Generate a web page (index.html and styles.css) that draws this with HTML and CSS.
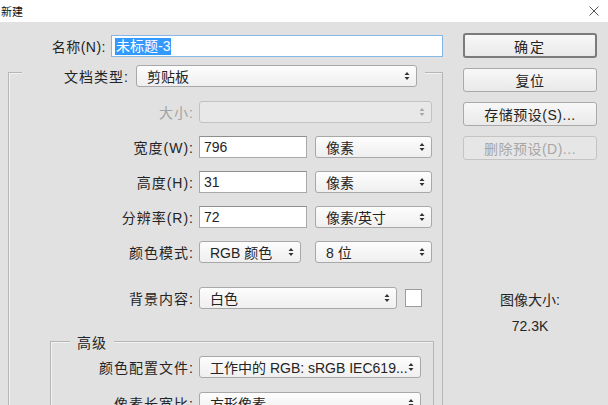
FILE: index.html
```
<!DOCTYPE html>
<html lang="zh-CN">
<head>
<meta charset="utf-8">
<title>新建</title>
<link rel="stylesheet" href="styles.css">
</head>
<body>
<div class="titlebar">
  <span class="title">新建</span>
  <svg class="close" viewBox="0 0 10 10"><path d="M0.5 0.5 L9.5 9.5 M9.5 0.5 L0.5 9.5"/></svg>
</div>
<div class="dialog">
  <div class="left">
    <div class="name-row">
      <span class="name-label">名称(N):</span>
      <div class="text-input name-input"><span class="sel">未标题-3</span></div>
    </div>
    <div class="group preset">
      <div class="legend preset-legend">
        <span class="legend-label">文档类型:</span>
        <div class="select w-doc"><span>剪贴板</span><svg class="arr" viewBox="0 0 6 10"><path d="M3 1 L5.5 4 H0.5Z M3 9 L5.5 6 H0.5Z"/></svg></div>
      </div>
      <div class="rows">
        <div class="row">
          <span class="label disabled">大小:</span>
          <div class="select disabled-select w-size"><span></span><svg class="arr" viewBox="0 0 6 10"><path d="M3 1 L5.5 4 H0.5Z M3 9 L5.5 6 H0.5Z"/></svg></div>
        </div>
        <div class="row">
          <span class="label">宽度(W):</span>
          <div class="text-input w-num">796</div>
          <div class="select w-unit gap8"><span>像素</span><svg class="arr" viewBox="0 0 6 10"><path d="M3 1 L5.5 4 H0.5Z M3 9 L5.5 6 H0.5Z"/></svg></div>
        </div>
        <div class="row">
          <span class="label">高度(H):</span>
          <div class="text-input w-num">31</div>
          <div class="select w-unit gap8"><span>像素</span><svg class="arr" viewBox="0 0 6 10"><path d="M3 1 L5.5 4 H0.5Z M3 9 L5.5 6 H0.5Z"/></svg></div>
        </div>
        <div class="row">
          <span class="label">分辨率(R):</span>
          <div class="text-input w-num">72</div>
          <div class="select w-unit gap8"><span>像素/英寸</span><svg class="arr" viewBox="0 0 6 10"><path d="M3 1 L5.5 4 H0.5Z M3 9 L5.5 6 H0.5Z"/></svg></div>
        </div>
        <div class="row">
          <span class="label">颜色模式:</span>
          <div class="select w-mode"><span>RGB 颜色</span><svg class="arr" viewBox="0 0 6 10"><path d="M3 1 L5.5 4 H0.5Z M3 9 L5.5 6 H0.5Z"/></svg></div>
          <div class="select w-unit gap14"><span>8 位</span><svg class="arr" viewBox="0 0 6 10"><path d="M3 1 L5.5 4 H0.5Z M3 9 L5.5 6 H0.5Z"/></svg></div>
        </div>
        <div class="row row-bg">
          <span class="label">背景内容:</span>
          <div class="select w-bg"><span>白色</span><svg class="arr" viewBox="0 0 6 10"><path d="M3 1 L5.5 4 H0.5Z M3 9 L5.5 6 H0.5Z"/></svg></div>
          <div class="swatch"></div>
        </div>
      </div>
      <div class="group adv">
        <div class="legend adv-legend">高级</div>
        <div class="rows adv-rows">
          <div class="row">
            <span class="label adv-label">颜色配置文件:</span>
            <div class="select w-adv"><span>工作中的 RGB: sRGB IEC619...</span><svg class="arr" viewBox="0 0 6 10"><path d="M3 1 L5.5 4 H0.5Z M3 9 L5.5 6 H0.5Z"/></svg></div>
          </div>
          <div class="row">
            <span class="label adv-label">像素长宽比:</span>
            <div class="select w-adv"><span>方形像素</span><svg class="arr" viewBox="0 0 6 10"><path d="M3 1 L5.5 4 H0.5Z M3 9 L5.5 6 H0.5Z"/></svg></div>
          </div>
        </div>
      </div>
    </div>
  </div>
  <div class="right">
    <div class="btn btn-default">确定</div>
    <div class="btn">复位</div>
    <div class="btn">存储预设(S)...</div>
    <div class="btn btn-disabled">删除预设(D)...</div>
    <div class="info">
      <div class="info-title">图像大小:</div>
      <div class="info-value">72.3K</div>
    </div>
  </div>
</div>
</body>
</html>
```

FILE: styles.css
```
* { box-sizing: border-box; }
html, body { margin: 0; padding: 0; }
body {
  width: 608px;
  height: 405px;
  overflow: hidden;
  background: #e1e1e1;
  font-family: "Liberation Sans", "Noto Sans CJK SC", sans-serif;
  font-size: 14px;
  color: #242424;
}
.titlebar {
  height: 22px;
  background: #ffffff;
  display: flex;
  align-items: center;
  justify-content: space-between;
  padding: 0 9px 0 1px;
}
.title { font-size: 11px; color: #111; }
.close { width: 10px; height: 10px; }
.close path { stroke: #555; stroke-width: 1; fill: none; }

.dialog { display: flex; gap: 20px; padding-left: 8px; }
.left { width: 435px; display: flex; flex-direction: column; }

.name-row { display: flex; align-items: center; margin-top: 13px; height: 22px; }
.name-label { width: 98px; text-align: right; margin-right: 5px; letter-spacing: 0.5px; }

.text-input {
  height: 22px;
  background: #ffffff;
  border: 1px solid #a9a9a9;
  border-top-color: #8e8e8e;
  display: flex;
  align-items: center;
  padding-left: 4px;
}
.name-input { width: 332px; border: 1px solid #86b6e6; padding-left: 3px; }
.sel { background: #3399ff; color: #ffffff; line-height: 17px; padding: 0 1px; }

.group { border: 1px solid #b6b6b6; box-shadow: inset 1px 1px 0 #f2f2f2; }
.preset { margin-top: 15px; height: 420px; }
.legend { display: flex; align-items: center; background: #e1e1e1; }
.preset-legend { margin: -8px 0 0 13px; width: 403px; height: 22px; padding-right: 8px; }
.legend-label { flex: 1; text-align: right; margin-right: 7px; letter-spacing: 1px; }

.rows { display: flex; flex-direction: column; gap: 13px; margin-top: 14px; }
.row { display: flex; align-items: center; height: 22px; }
.label { width: 185px; text-align: right; margin-right: 5px; letter-spacing: 1px; }
.label.disabled { color: #a3a3a3; }
.row-bg { margin-top: 11px; }

.select {
  height: 22px;
  border: 1px solid #a8a8a8;
  border-radius: 3px;
  background: linear-gradient(#fdfdfd, #efefef);
  display: flex;
  align-items: center;
  justify-content: space-between;
  padding: 0 6px 0 10px;
  white-space: nowrap;
}
.arr { width: 6px; height: 10px; flex: none; }
.arr path { fill: #333; }
.disabled-select { background: #e8e8e8; border-color: #c2c2c2; }
.disabled-select .arr path { fill: #a8a8a8; }

.w-doc { width: 281px; }
.w-size { width: 233px; }
.w-num { width: 108px; }
.w-unit { width: 117px; }
.w-mode { width: 102px; }
.w-bg { width: 198px; }
.w-adv { width: 222px; }
.gap8 { margin-left: 8px; }
.gap14 { margin-left: 14px; }

.swatch {
  width: 17px;
  height: 18px;
  margin-left: 8px;
  background: #ffffff;
  border: 1px solid #9c9c9c;
}

.adv { margin: 32px 0 0 41px; width: 384px; height: 200px; }
.adv-legend { margin: -9px 0 0 19px; height: 18px; padding: 0 7px; width: max-content; letter-spacing: 1px; }
.adv-rows { margin-top: 5px; gap: 14px; }
.adv-label { width: 143px; }

.right { width: 134px; display: flex; flex-direction: column; }
.btn {
  height: 24px;
  margin-top: 10px;
  display: flex;
  align-items: center;
  justify-content: center;
  border: 1px solid #a9a9a9;
  border-radius: 3px;
  background: linear-gradient(#f8f8f8, #e9e9e9);
  color: #242424;
  letter-spacing: 0.5px;
}
.btn-default { margin-top: 11px; height: 25px; border: 2px solid #7b7b7b; letter-spacing: 2px; }
.btn-disabled { color: #a6a6a6; border-color: #c4c4c4; background: #e6e6e6; }

.info { margin-top: 132px; text-align: center; line-height: 16px; }
.info-value { margin-top: 10px; }
```
